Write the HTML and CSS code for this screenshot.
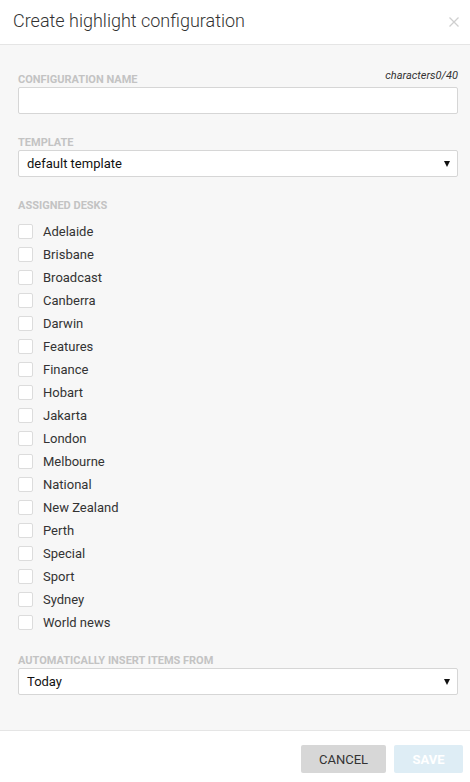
FILE: index.html
```html
<!DOCTYPE html>
<html>
<head>
<meta charset="utf-8">
<link rel="stylesheet" href="styles.css">
</head>
<body>
<div class="modal">
  <div class="header">
    <h3 class="title">Create highlight configuration</h3>
    <svg class="close" width="10" height="10" viewBox="0 0 10 10"><path d="M0.5 0.5L9.5 9.5M9.5 0.5L0.5 9.5" stroke="#cfcfcf" stroke-width="1.3"/></svg>
  </div>
  <div class="body">
    <div class="field">
      <div class="label-row"><span class="label">Configuration name</span><span class="counter">characters0/40</span></div>
      <div class="input"></div>
    </div>
    <div class="field">
      <div class="label-row"><span class="label">Template</span></div>
      <div class="select"><span>default template</span><span class="arrow"></span></div>
    </div>
    <div class="field">
      <div class="label-row"><span class="label">Assigned desks</span></div>
      <ul class="desks">
        <li><span class="box"></span>Adelaide</li>
        <li><span class="box"></span>Brisbane</li>
        <li><span class="box"></span>Broadcast</li>
        <li><span class="box"></span>Canberra</li>
        <li><span class="box"></span>Darwin</li>
        <li><span class="box"></span>Features</li>
        <li><span class="box"></span>Finance</li>
        <li><span class="box"></span>Hobart</li>
        <li><span class="box"></span>Jakarta</li>
        <li><span class="box"></span>London</li>
        <li><span class="box"></span>Melbourne</li>
        <li><span class="box"></span>National</li>
        <li><span class="box"></span>New Zealand</li>
        <li><span class="box"></span>Perth</li>
        <li><span class="box"></span>Special</li>
        <li><span class="box"></span>Sport</li>
        <li><span class="box"></span>Sydney</li>
        <li><span class="box"></span>World news</li>
      </ul>
    </div>
    <div class="field">
      <div class="label-row"><span class="label">Automatically insert items from</span></div>
      <div class="select"><span>Today</span><span class="arrow"></span></div>
    </div>
  </div>
  <div class="footer">
    <button class="btn cancel">Cancel</button>
    <button class="btn save">Save</button>
  </div>
</div>
</body>
</html>
```
FILE: styles.css
```css
* { box-sizing: border-box; }
html, body { margin: 0; padding: 0; }
body {
  font-family: Roboto, "Liberation Sans", sans-serif;
  background: #fff;
  color: #333;
}
.modal {
  width: 470px;
  height: 782px;
  display: flex;
  flex-direction: column;
  background: #fff;
}
.header {
  height: 45px;
  border-bottom: 1px solid #e5e5e5;
  display: flex;
  align-items: center;
  justify-content: space-between;
  padding: 0 11px 4px 13px;
}
.title {
  margin: 0;
  font-size: 18px;
  font-weight: 300;
  color: #333;
}
.close { margin-top: 3px; }
.body {
  flex: 1;
  background: #f7f7f7;
  padding: 25px 12px 0 18px;
  display: flex;
  flex-direction: column;
  gap: 19px;
}
.label-row {
  display: flex;
  justify-content: space-between;
  align-items: flex-end;
  height: 16px;
  margin-bottom: 1px;
}
.label {
  font-size: 11px;
  line-height: 12px;
  font-weight: 700;
  text-transform: uppercase;
  color: #c3c3c3;
}
.counter {
  align-self: flex-start;
  font-size: 11px;
  line-height: 12px;
  font-style: italic;
  color: #333;
}
.input, .select {
  height: 27px;
  background: #fff;
  border: 1px solid #d6d6d6;
  border-radius: 2px;
}
.select {
  display: flex;
  align-items: center;
  justify-content: space-between;
  padding: 0 7px 0 8px;
  font-size: 13px;
  color: #111;
}
.arrow {
  width: 0;
  height: 0;
  border-left: 3.5px solid transparent;
  border-right: 3.5px solid transparent;
  border-top: 6px solid #111;
  margin-top: 1px;
}
.desks {
  list-style: none;
  margin: 8px 0 -2px 0;
  padding: 0;
}
.desks li {
  height: 23px;
  display: flex;
  align-items: center;
  font-size: 13px;
  color: #333;
}
.box {
  width: 15px;
  height: 15px;
  border: 1px solid #dcdcdc;
  border-radius: 2px;
  background: #fff;
  margin-right: 10px;
}
.footer {
  height: 52px;
  border-top: 1px solid #e5e5e5;
  background: #fff;
  display: flex;
  justify-content: flex-end;
  align-items: flex-start;
  gap: 8px;
  padding: 14px 7px 0 0;
}
.btn {
  height: 28px;
  border: none;
  border-radius: 2px;
  font-family: Roboto, "Liberation Sans", sans-serif;
  font-size: 13px;
  text-transform: uppercase;
  padding: 0;
}
.cancel {
  width: 85px;
  background: #d7d7d7;
  color: #333;
}
.save {
  width: 69px;
  background: #deedf5;
  color: #fff;
  font-weight: 700;
}
```
